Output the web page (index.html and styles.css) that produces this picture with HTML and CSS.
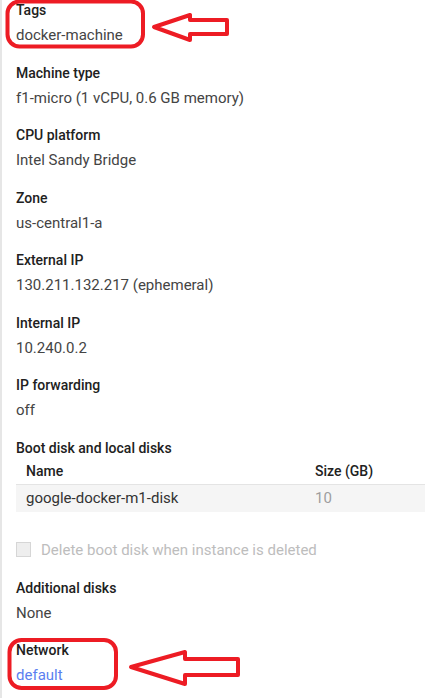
FILE: index.html
```html
<!DOCTYPE html>
<html>
<head>
	<meta charset='utf-8'/>
	<title>VM instance details</title>
	<link rel="stylesheet" href="styles.css">
</head>
<body>
	<div class="details">
		<div class="field">
			<div class="label">Tags</div>
			<div class="value">docker-machine</div>
		</div>
		<div class="field">
			<div class="label">Machine type</div>
			<div class="value">f1-micro (1 vCPU, 0.6 GB memory)</div>
		</div>
		<div class="field">
			<div class="label">CPU platform</div>
			<div class="value">Intel Sandy Bridge</div>
		</div>
		<div class="field">
			<div class="label">Zone</div>
			<div class="value">us-central1-a</div>
		</div>
		<div class="field">
			<div class="label">External IP</div>
			<div class="value">130.211.132.217 (ephemeral)</div>
		</div>
		<div class="field">
			<div class="label">Internal IP</div>
			<div class="value">10.240.0.2</div>
		</div>
		<div class="field">
			<div class="label">IP forwarding</div>
			<div class="value">off</div>
		</div>
		<div class="field disks">
			<div class="label">Boot disk and local disks</div>
			<table class="disk_table">
				<tr class="head">
					<th class="col_name">Name</th>
					<th class="col_size">Size (GB)</th>
				</tr>
				<tr class="row">
					<td class="col_name">google-docker-m1-disk</td>
					<td class="col_size">10</td>
				</tr>
			</table>
			<label class="check">
				<span class="box"></span>
				<span>Delete boot disk when instance is deleted</span>
			</label>
		</div>
		<div class="field">
			<div class="label">Additional disks</div>
			<div class="value">None</div>
		</div>
		<div class="field">
			<div class="label">Network</div>
			<div class="value"><a href="javascript:;">default</a></div>
		</div>
	</div>

	<svg class="marks" width="425" height="698" viewBox="0 0 425 698">
		<rect x="7.5" y="1.5" width="135.5" height="45" rx="12" ry="12"/>
		<polygon points="154,27 190,15 190,20 227,20 227,34 190,34 190,40"/>
		<rect x="9.5" y="640" width="106.5" height="48" rx="12" ry="12"/>
		<polygon points="131,667 185,652 185,659 238,659 238,675 185,675 185,684"/>
	</svg>
</body>
</html>
```

FILE: styles.css
```css
*{
	margin: 0;
	padding: 0;
}
body{
	font-family: Roboto, "Liberation Sans", sans-serif;
	background: #fff;
	width: 425px;
	height: 698px;
	overflow: hidden;
	position: relative;
}
a{
	text-decoration: none;
	color: #5b7ff0;
}
.details{
	border-left: 2px solid #e6e6e6;
	padding-left: 14px;
	min-height: 698px;
	box-sizing: border-box;
}
.field{
	margin-bottom: 15.5px;
}
.field.disks{
	margin-bottom: 18px;
}
.label{
	font-size: 14px;
	font-weight: 500;
	line-height: 20px;
	color: #212121;
}
.value{
	font-size: 15px;
	line-height: 24px;
	margin-top: 3px;
	color: #444;
}
.disk_table{
	width: 100%;
	border-collapse: collapse;
	font-size: 15px;
}
.disk_table th{
	text-align: left;
	font-weight: 500;
	font-size: 14px;
	color: #212121;
	height: 26px;
	border-bottom: 1px solid #e4e4e4;
}
.disk_table td{
	height: 27px;
	background: #f5f5f5;
	color: #333;
}
.disk_table .col_name{
	padding-left: 10px;
	width: 289px;
}
.disk_table td.col_size{
	color: #9e9e9e;
}
.check{
	display: flex;
	align-items: center;
	gap: 10px;
	margin-top: 28px;
	height: 20px;
	font-size: 15px;
	color: #bdbdbd;
}
.check .box{
	width: 13px;
	height: 13px;
	border: 1px solid #d6d6d6;
	background: #eee;
}
.marks{
	position: absolute;
	left: 0;
	top: 0;
	pointer-events: none;
}
.marks rect,
.marks polygon{
	fill: none;
	stroke: #ed1c24;
	stroke-width: 4;
	stroke-linejoin: round;
}
```
